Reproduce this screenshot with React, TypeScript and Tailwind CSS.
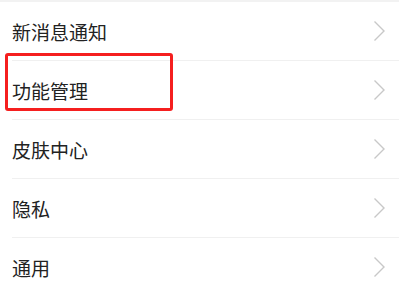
const ITEMS = ["新消息通知", "功能管理", "皮肤中心", "隐私", "通用"];

function Chevron() {
  return (
    <svg width="13" height="22" viewBox="0 0 13 22" fill="none" className="shrink-0">
      <path d="M1.5 1.5 L11 11 L1.5 20.5" stroke="#c8c8c8" strokeWidth="1.4" />
    </svg>
  );
}

export default function App() {
  return (
    <div
      className="relative h-[291px] w-[399px] overflow-hidden bg-white pt-[2px]"
      style={{ fontFamily: '"Noto Sans CJK SC", "Noto Sans", sans-serif' }}
    >
      <div className="absolute left-0 top-0 h-[2px] w-full bg-[#f2f2f2]" />
      {ITEMS.map((label) => (
        <div key={label} className="ml-3 flex h-[59px] items-center justify-between border-b border-[#f0f0f0] pr-[13px]">
          <span className="text-[19px] leading-none text-[#222222]">{label}</span>
          <Chevron />
        </div>
      ))}
      <div className="pointer-events-none absolute left-[5px] top-[53px] h-[58px] w-[168px] rounded-[3px] border-[3px] border-[#f51f1f]" />
    </div>
  );
}
